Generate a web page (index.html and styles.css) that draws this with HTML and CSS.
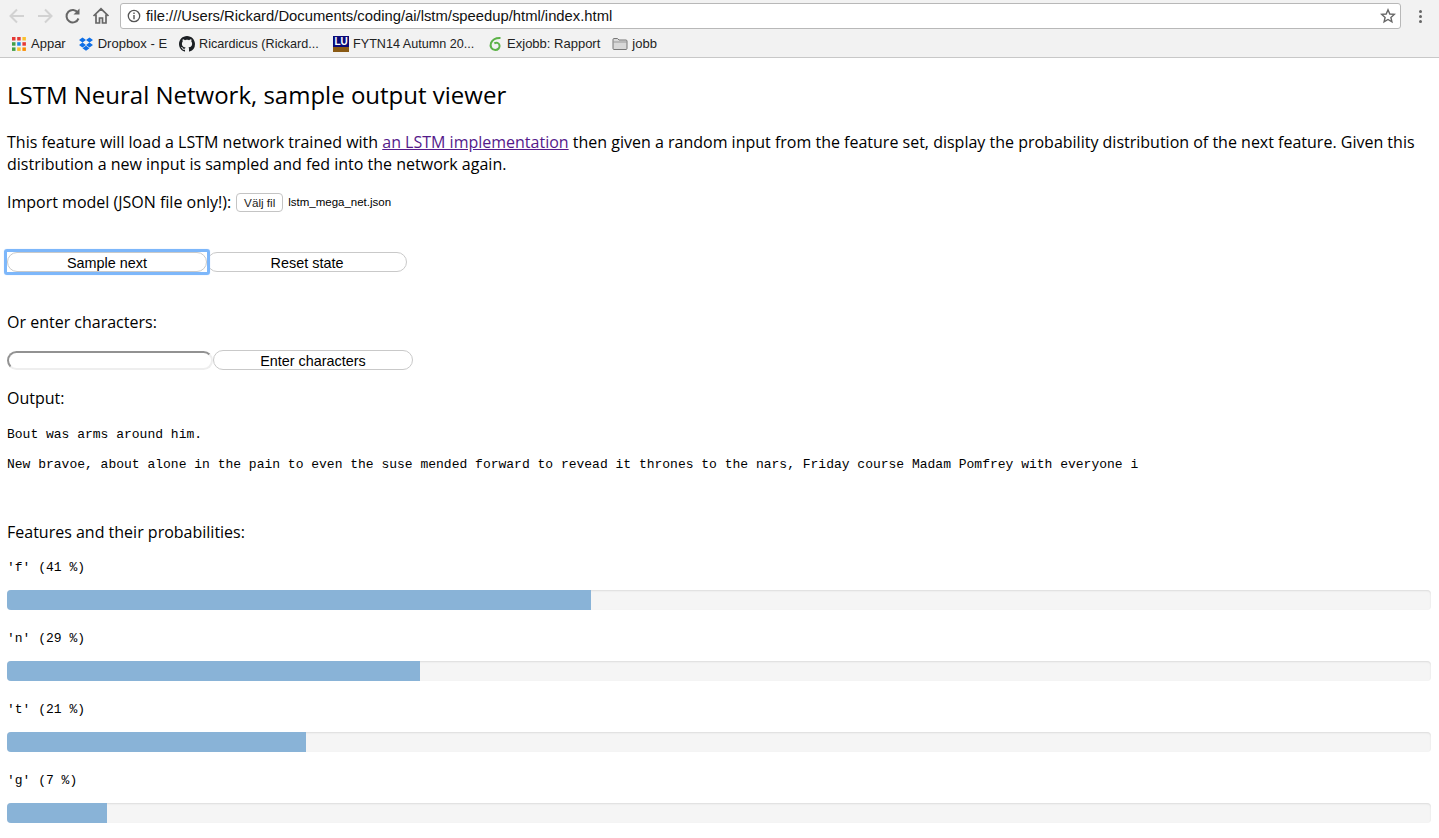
FILE: index.html
```html
<!DOCTYPE html>
<html lang="en">
<head>
    <meta charset="UTF-8">
    <meta name="viewport" content="width=device-width, initial-scale=1.0">
    <title>LSTM Neural Network, sample output viewer</title>
    <link rel="stylesheet" href="styles.css">
</head>
<body>
    <header class="browser">
        <div class="toolbar">
            <div class="nav-icons">
                <svg class="nav-icon" viewBox="0 0 20 20"><path d="M17 10H4M10 3.500L3.500 10l6.500 6.500" fill="none" stroke="#d2d2d2" stroke-width="2"/></svg>
                <svg class="nav-icon" viewBox="0 0 20 20"><path d="M3 10h13M10 3.500l6.500 6.500-6.500 6.500" fill="none" stroke="#d2d2d2" stroke-width="2"/></svg>
                <svg class="nav-icon" viewBox="0 0 20 20"><path d="M15.500 12.500a6.200 6.200 0 1 1-.6-5.800" fill="none" stroke="#666" stroke-width="2"/><path d="M16.500 2.500v6h-6z" fill="#666"/></svg>
                <svg class="nav-icon" viewBox="0 0 20 20"><path d="M2.500 10L10 2.800 17.500 10M5 8.500V17h3.500v-5h3v5H15V8.500" fill="none" stroke="#666" stroke-width="1.700"/></svg>
            </div>
            <div class="address-bar">
                <svg class="info-icon" viewBox="0 0 14 14"><circle cx="7" cy="7" r="5.700" fill="none" stroke="#555" stroke-width="1.300"/><path d="M6.300 6h1.400v4.300H6.300zM6.300 3.500h1.400v1.400H6.300z" fill="#555"/></svg>
                <span class="address-text">file:///Users/Rickard/Documents/coding/ai/lstm/speedup/html/index.html</span>
                <svg class="star-icon" viewBox="0 0 16 16"><path d="M8 1.800l1.800 4.200 4.500.4-3.400 3 1 4.500L8 11.500l-3.900 2.400 1-4.500-3.400-3 4.500-.4z" fill="none" stroke="#666" stroke-width="1.400"/></svg>
            </div>
            <div class="menu-dots"><i></i><i></i><i></i></div>
        </div>
        <nav class="bookmarks">
            <a class="bookmark">
                <svg class="bm-icon" viewBox="0 0 16 16">
                    <rect x="1" y="1" width="3.500" height="3.500" fill="#e53935"/><rect x="6.200" y="1" width="3.500" height="3.500" fill="#e53935"/><rect x="11.400" y="1" width="3.500" height="3.500" fill="#fbc02d"/>
                    <rect x="1" y="6.200" width="3.500" height="3.500" fill="#43a047"/><rect x="6.200" y="6.200" width="3.500" height="3.500" fill="#1e88e5"/><rect x="11.400" y="6.200" width="3.500" height="3.500" fill="#e53935"/>
                    <rect x="1" y="11.400" width="3.500" height="3.500" fill="#43a047"/><rect x="6.200" y="11.400" width="3.500" height="3.500" fill="#fbc02d"/><rect x="11.400" y="11.400" width="3.500" height="3.500" fill="#fb8c00"/>
                </svg>
                <span>Appar</span>
            </a>
            <a class="bookmark">
                <svg class="bm-icon" viewBox="0 0 16 16"><path d="M4.500 1.500L8 4 4.500 6.500 1 4zM11.500 1.500L15 4l-3.500 2.500L8 4zM4.500 6.500L8 9l-3.500 2.500L1 9zM11.500 6.500L15 9l-3.500 2.500L8 9zM4.500 12.300L8 9.800l3.500 2.500L8 14.800z" fill="#0f6fe6"/></svg>
                <span>Dropbox - E</span>
            </a>
            <a class="bookmark">
                <svg class="bm-icon" viewBox="0 0 16 16"><path fill="#1b1f23" d="M8 0C3.580 0 0 3.580 0 8c0 3.540 2.290 6.530 5.470 7.590.4.070.55-.17.55-.38 0-.19-.01-.82-.01-1.490-2.010.37-2.530-.49-2.690-.94-.09-.23-.48-.94-.82-1.130-.28-.15-.68-.52-.01-.53.63-.01 1.080.58 1.230.82.72 1.210 1.870.87 2.330.66.070-.52.280-.87.510-1.070-1.780-.2-3.640-.89-3.640-3.950 0-.87.31-1.590.82-2.150-.08-.2-.36-1.020.08-2.120 0 0 .67-.21 2.200.82.640-.18 1.320-.27 2-.27s1.360.09 2 .27c1.530-1.040 2.200-.82 2.200-.82.44 1.100.16 1.920.08 2.120.51.560.82 1.270.82 2.150 0 3.070-1.870 3.750-3.650 3.950.29.250.54.730.54 1.480 0 1.070-.01 1.930-.01 2.200 0 .21.150.46.550.38A8.010 8.010 0 0 0 16 8c0-4.420-3.580-8-8-8z"/></svg>
                <span class="bm-long">Ricardicus (Rickard...</span>
            </a>
            <a class="bookmark">
                <span class="lu-logo">LU</span>
                <span class="bm-long">FYTN14 Autumn 20...</span>
            </a>
            <a class="bookmark">
                <svg class="bm-icon" viewBox="0 0 16 16"><path d="M13.500 2C9.500 1.800 5.500 3.500 4 7c-1.300 3.300.6 7 4.200 7 3 0 4.800-2.400 4.300-4.800-.5-2.200-3-3.300-5.200-1.900" fill="none" stroke="#5cb247" stroke-width="2"/></svg>
                <span>Exjobb: Rapport</span>
            </a>
            <a class="bookmark">
                <svg class="bm-icon" viewBox="0 0 16 14"><path d="M1 2.500C1 2 1.300 1.500 2 1.500h3.500L7 3h7c.6 0 1 .4 1 1v7.500c0 .6-.4 1-1 1H2c-.6 0-1-.4-1-1z" fill="#d8d8d8" stroke="#777"/><path d="M1 5h14" stroke="#999"/></svg>
                <span>jobb</span>
            </a>
        </nav>
    </header>

    <main class="page">
        <h1 class="page-title">LSTM Neural Network, sample output viewer</h1>
        <p class="intro">This feature will load a LSTM network trained with <a class="intro-link" href="#">an LSTM implementation</a> then given a random input from the feature set, display the probability distribution of the next feature. Given this distribution a new input is sampled and fed into the network again.</p>

        <div class="import-row">
            <span>Import model (JSON file only!):</span>
            <button class="file-button" type="button">Välj fil</button>
            <span class="file-name">lstm_mega_net.json</span>
        </div>

        <div class="button-row sample-row">
            <button class="pill-button is-focused" type="button">Sample next</button>
            <button class="pill-button" type="button">Reset state</button>
        </div>

        <p class="enter-label">Or enter characters:</p>

        <div class="button-row enter-row">
            <input class="char-input" type="text">
            <button class="pill-button" type="button">Enter characters</button>
        </div>

        <p class="output-label">Output:</p>
        <p class="output-text first-line">Bout was arms around him.</p>
        <p class="output-text">New bravoe, about alone in the pain to even the suse mended forward to revead it thrones to the nars, Friday course Madam Pomfrey with everyone i</p>

        <p class="features-label">Features and their probabilities:</p>

        <div class="feature">
            <div class="feature-name">'f' (41 %)</div>
            <div class="progress"><div class="progress-fill" style="width: 41%"></div></div>
        </div>
        <div class="feature">
            <div class="feature-name">'n' (29 %)</div>
            <div class="progress"><div class="progress-fill" style="width: 29%"></div></div>
        </div>
        <div class="feature">
            <div class="feature-name">'t' (21 %)</div>
            <div class="progress"><div class="progress-fill" style="width: 21%"></div></div>
        </div>
        <div class="feature">
            <div class="feature-name">'g' (7 %)</div>
            <div class="progress"><div class="progress-fill" style="width: 7%"></div></div>
        </div>
    </main>
</body>
</html>
```

FILE: styles.css
```css
* {
    margin: 0;
    padding: 0;
    box-sizing: border-box;
}

html, body {
    height: 100%;
    overflow: hidden;
}

body {
    font-family: 'Open Sans', 'Noto Sans', sans-serif;
    font-size: 16px;
    line-height: 22px;
    color: #000;
    background-color: #fff;
}

/* browser chrome */
.browser {
    height: 58px;
    background-color: #f2f2f2;
    border-bottom: 1px solid #c8c8c8;
    font-family: 'Liberation Sans', Arial, sans-serif;
}

.toolbar {
    display: flex;
    align-items: center;
    height: 32px;
}

.nav-icons {
    display: flex;
    align-items: center;
    gap: 8px;
    padding-left: 7px;
}

.nav-icon {
    width: 20px;
    height: 20px;
}

.address-bar {
    display: flex;
    align-items: center;
    flex: 1;
    height: 26px;
    margin-left: 9px;
    padding: 0 4px 0 6px;
    background-color: #fff;
    border: 1px solid #b8b8b8;
    border-radius: 3px;
}

.info-icon {
    width: 14px;
    height: 14px;
}

.address-text {
    flex: 1;
    margin-left: 5px;
    font-size: 14.8px;
    color: #111;
}

.star-icon {
    width: 16px;
    height: 16px;
}

.menu-dots {
    display: flex;
    flex-direction: column;
    gap: 2px;
    width: 38px;
    align-items: center;
}

.menu-dots i {
    width: 3px;
    height: 3px;
    border-radius: 50%;
    background-color: #666;
}

.bookmarks {
    display: flex;
    align-items: center;
    height: 23px;
    padding-left: 11px;
    font-size: 13px;
    color: #222;
}

.bookmark {
    display: flex;
    align-items: center;
    gap: 4px;
    margin-right: 12px;
    white-space: nowrap;
}

.bm-long {
    width: 122px;
    font-size: 12.6px;
}

.bm-icon {
    width: 16px;
    height: 16px;
}

.lu-logo {
    display: block;
    width: 16px;
    height: 16px;
    background: linear-gradient(#0a0a78 70%, #8a5a14 70%);
    color: #fff;
    font-size: 10px;
    font-weight: 700;
    line-height: 12px;
    text-align: center;
}

/* page */
.page {
    padding: 0 8px 0 7px;
}

.page-title {
    padding-top: 20px;
    font-size: 24px;
    font-weight: 400;
    line-height: 33px;
}

.intro {
    margin-top: 20px;
}

.intro-link {
    color: #551a8b;
    text-decoration: underline;
}

.import-row {
    display: flex;
    align-items: center;
    margin-top: 16px;
}

.file-button {
    width: 47px;
    height: 19px;
    margin-left: 5px;
    font-family: 'Liberation Sans', Arial, sans-serif;
    font-size: 11.7px;
    color: #222;
    background-color: #fff;
    border: 1px solid #c4c4c4;
    border-radius: 4px;
}

.file-name {
    margin-left: 5px;
    font-family: 'Liberation Sans', Arial, sans-serif;
    font-size: 11.5px;
}

.button-row {
    display: flex;
    align-items: flex-end;
}

.sample-row {
    margin-top: 39px;
}

.enter-row {
    margin-top: 17px;
}

.pill-button {
    position: relative;
    width: 200px;
    height: 20px;
    padding-top: 1px;
    font-family: 'Liberation Sans', Arial, sans-serif;
    font-size: 14.4px;
    color: #000;
    background-color: #fff;
    border: 1px solid #c9c9c9;
    border-radius: 10px;
}

/* focus ring keeps square corners around the pill */
.is-focused {
    z-index: 1;
}

.is-focused::after {
    content: "";
    position: absolute;
    inset: -4px;
    border: 3px solid #7db7fa;
    border-radius: 3px;
    box-shadow: 0 0 1px #a8cdfa;
}

.enter-label {
    margin-top: 39px;
}

.char-input {
    width: 206px;
    height: 19px;
    background-color: #fff;
    border: 2px solid #eeeeee;
    border-top-color: #929292;
    border-left-color: #929292;
    border-radius: 10px;
}

.output-label {
    margin-top: 17px;
}

.output-text {
    margin-top: 9px;
    font-family: 'Liberation Mono', monospace;
    font-size: 13px;
    line-height: 21px;
    white-space: nowrap;
}

.first-line {
    margin-top: 15px;
}

.features-label {
    margin-top: 46px;
    margin-bottom: 14px;
}

.feature-name {
    font-family: 'Liberation Mono', monospace;
    font-size: 13px;
    line-height: 22px;
}

.progress {
    width: 100%;
    height: 20px;
    margin-top: 11px;
    margin-bottom: 18px;
    background-color: #f5f5f5;
    border-radius: 4px;
    box-shadow: inset 0 1px 2px rgba(0, 0, 0, 0.1);
    overflow: hidden;
}

.progress-fill {
    height: 100%;
    background-color: #89b3d7;
}
```
